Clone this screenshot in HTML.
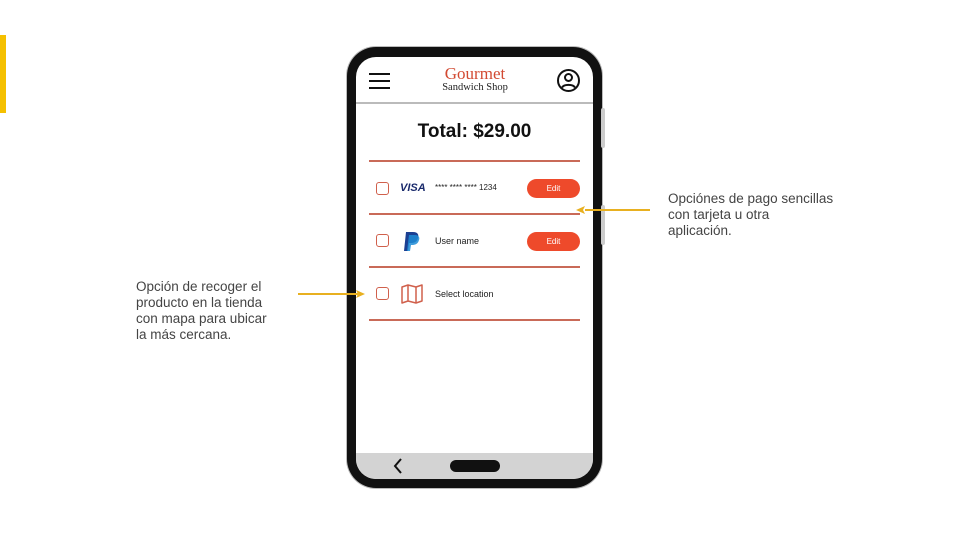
<!DOCTYPE html>
<html><head><meta charset="utf-8"><style>
*{margin:0;padding:0;box-sizing:border-box}
body{width:960px;height:540px;background:#fff;position:relative;overflow:hidden;font-family:"Liberation Sans",sans-serif}
.abs{position:absolute}
.note{font-size:13.5px;color:#444;line-height:16px;white-space:nowrap}
.line{position:absolute;left:369px;width:211px;height:2px;background:#c96a58}
.cb{position:absolute;left:376px;width:13px;height:13px;border:1.8px solid #d0604c;border-radius:3px}
.edit{position:absolute;left:527px;width:53px;height:19px;background:#ee4a2b;border-radius:10px;color:#fff;font-size:8px;text-align:center;line-height:19px}
.lbl{position:absolute;font-size:9px;color:#222}
</style></head><body>
<div class="abs" style="left:0;top:35px;width:6px;height:78px;background:#f5c000"></div>

<div class="abs" style="left:346px;top:46px;width:257px;height:443px;border-radius:30px;background:#bbb"></div>
<div class="abs" style="left:347px;top:47px;width:255px;height:441px;border-radius:29px;background:#111"></div>
<div class="abs" style="left:601px;top:108px;width:4px;height:40px;background:#ccc;border-radius:2px"></div>
<div class="abs" style="left:601px;top:205px;width:4px;height:40px;background:#ccc;border-radius:2px"></div>
<div class="abs" style="left:356px;top:57px;width:237px;height:422px;border-radius:20px;background:#fff;overflow:hidden">
  <div class="abs" style="left:0;top:396px;width:237px;height:26px;background:#d3d3d3"></div>
  <div class="abs" style="left:0;top:45px;width:237px;height:1.5px;background:#bbb"></div>
</div>
<div class="abs" style="left:369px;top:73px;width:21px;height:2px;background:#111"></div>
<div class="abs" style="left:369px;top:80px;width:21px;height:2px;background:#111"></div>
<div class="abs" style="left:369px;top:87px;width:21px;height:2px;background:#111"></div>
<div class="abs" style="left:420px;top:65px;width:110px;text-align:center;font-family:'Liberation Serif',serif;color:#d24a32;font-size:17px;line-height:18px">Gourmet</div>
<div class="abs" style="left:420px;top:82px;width:110px;text-align:center;font-family:'Liberation Serif',serif;color:#222;font-size:10.5px">Sandwich Shop</div>
<svg class="abs" style="left:556px;top:68px" width="25" height="25" viewBox="0 0 25 25" fill="none" stroke="#111" stroke-width="2"><circle cx="12.5" cy="12.5" r="10.5"/><circle cx="12.5" cy="9.5" r="3.5"/><path d="M6 19.5c2-3.5 11-3.5 13 0"/></svg>

<div class="abs" style="left:356px;top:121px;width:237px;text-align:center;font-size:19px;font-weight:bold;color:#111">Total: $29.00</div>

<div class="line" style="top:160px"></div>
<div class="line" style="top:213px"></div>
<div class="line" style="top:266px"></div>
<div class="line" style="top:319px"></div>

<div class="cb" style="top:182px"></div>
<div class="abs" style="left:400px;top:182px;font-size:11px;font-weight:bold;font-style:italic;color:#1a2a6c">VISA</div>
<div class="lbl" style="left:435px;top:183px;font-size:8px">**** **** **** 1234</div>
<div class="edit" style="top:179px">Edit</div>

<div class="cb" style="top:234px"></div>
<svg class="abs" style="left:403px;top:231px" width="18" height="21" viewBox="0 0 18 21"><path d="M3 1h7c5 0 6 3 5 6-1 4-4 5-7 5H6l-1 8H1z" fill="#1b3f92"/><path d="M6 4h6c4 0 5 3 4 5-1 4-4 5-7 5H8l-1 6H4z" fill="#1d8bd5" opacity=".85"/></svg>
<div class="lbl" style="left:435px;top:236px">User name</div>
<div class="edit" style="top:232px">Edit</div>

<div class="cb" style="top:287px"></div>
<svg class="abs" style="left:401px;top:284px" width="22" height="20" viewBox="0 0 22 20" fill="none" stroke="#d0604c" stroke-width="1.5" stroke-linejoin="round"><path d="M1 3l6-2 8 2 6-2v16l-6 2-8-2-6 2z M7 1v16 M15 3v16"/></svg>
<div class="lbl" style="left:435px;top:289px">Select location</div>

<svg class="abs" style="left:392px;top:458px" width="12" height="16" viewBox="0 0 12 16" fill="none" stroke="#111" stroke-width="2"><path d="M9 1L3 8l6 7"/></svg>
<div class="abs" style="left:450px;top:460px;width:50px;height:12px;border-radius:6px;background:#111"></div>

<div class="abs" style="left:585px;top:209px;width:65px;height:1.5px;background:#e8b020"></div>
<svg class="abs" style="left:576px;top:205px" width="10" height="10" viewBox="0 0 10 10"><path d="M0 5l9-4-2 4 2 4z" fill="#e8b020"/></svg>
<div class="abs" style="left:298px;top:293px;width:60px;height:1.5px;background:#e8b020"></div>
<svg class="abs" style="left:355px;top:289px" width="10" height="10" viewBox="0 0 10 10"><path d="M10 5L1 1l2 4-2 4z" fill="#e8b020"/></svg>

<div class="abs note" style="left:668px;top:191px">Opciónes de pago sencillas<br>con tarjeta u otra<br>aplicación.</div>
<div class="abs note" style="left:136px;top:279px">Opción de recoger el<br>producto en la tienda<br>con mapa para ubicar<br>la más cercana.</div>
</body></html>
